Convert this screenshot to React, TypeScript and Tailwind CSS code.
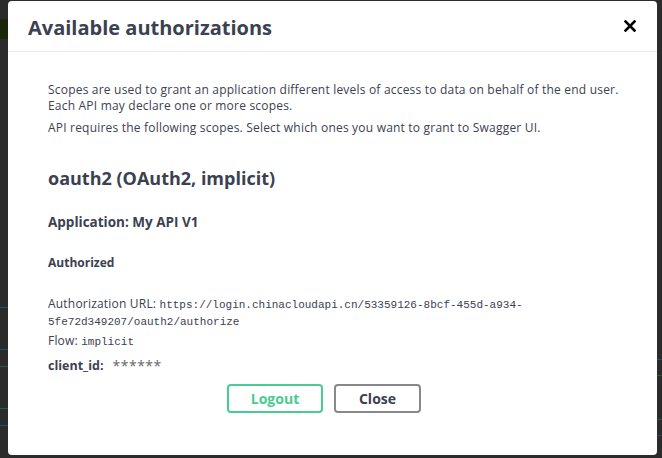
import React from "react";

const SANS = "font-['Open_Sans','Noto_Sans',sans-serif]";
const MONO = "font-['Liberation_Mono','DejaVu_Sans_Mono',monospace]";

function CloseIcon() {
  return (
    <svg width="12" height="12" viewBox="0 0 12 12" aria-hidden="true">
      <path d="M1.5 1.5 L10.5 10.5 M10.5 1.5 L1.5 10.5" stroke="#000" strokeWidth="2.6" strokeLinecap="square" />
    </svg>
  );
}

export default function App() {
  return (
    <div className={`flex h-[458px] w-[662px] bg-[#2b2b2b] ${SANS}`}>
      {/* left strip — page behind the overlay */}
      <div className="flex w-[8px] flex-col">
        <div className="mt-[19px] h-[20px] bg-[#1c2608]" />
        <div className="mt-[268px] h-px bg-[#2f4a66]" />
        <div className="mt-[41px] h-px bg-[#2f4a66]" />
        <div className="mt-[16px] h-px bg-[#2d5a3c]" />
        <div className="mt-[41px] h-px bg-[#2d5a3c]" />
        <div className="mt-[16px] h-px bg-[#2f4a66]" />
      </div>

      {/* modal */}
      <div className="mt-px flex h-[454px] w-[649px] flex-col rounded-[4px] bg-white text-[#3b4151]">
        <div className="flex h-[51px] items-center justify-between border-b border-[#ebebeb] pl-5 pr-[15px] pt-[3px]">
          <h3 className="text-[20px] font-bold leading-none">Available authorizations</h3>
          <button className="mb-[3px] flex h-6 w-6 items-center justify-center">
            <CloseIcon />
          </button>
        </div>

        <div className="flex flex-col pl-[40px] text-[12px] tracking-[0.2px]">
          <div className="mt-[30px] whitespace-nowrap leading-[16px]">
            <p>Scopes are used to grant an application different levels of access to data on behalf of the end user.</p>
            <p>Each API may declare one or more scopes.</p>
          </div>
          <p className="mt-[6px] whitespace-nowrap leading-[15px]">
            API requires the following scopes. Select which ones you want to grant to Swagger UI.
          </p>

          <h4 className="mt-[31px] text-[18px] font-bold leading-[24px] tracking-normal">oauth2 (OAuth2, implicit)</h4>
          <h6 className="mt-[23px] text-[13.5px] font-bold leading-[18px] tracking-normal">Application: My API V1</h6>
          <h6 className="mt-[24px] text-[12px] font-bold leading-[16px] tracking-normal">Authorized</h6>

          <p className="mt-[24px] leading-[17px]">
            Authorization URL:{" "}
            <code className={`${MONO} text-[11px] leading-none tracking-normal`}>https://login.chinacloudapi.cn/53359126-8bcf-455d-a934-</code>
            <br />
            <code className={`${MONO} text-[11px] leading-none tracking-normal`}>5fe72d349207/oauth2/authorize</code>
          </p>
          <p className="mt-[3px] leading-[17px]">
            Flow: <code className={`${MONO} text-[11px] leading-none tracking-normal`}>implicit</code>
          </p>
          <div className="mt-[8px] flex items-center leading-[18px] tracking-normal">
            <label className="text-[12.5px] font-bold">client_id:</label>
            <span className="ml-[9px] text-[14px] leading-none tracking-[0.5px] text-[#666]">******</span>
          </div>

          <div className="ml-[179px] mt-[9px] flex gap-[11px] tracking-normal">
            <button className="h-[29px] w-[96px] rounded-[4px] border-2 border-[#49cc90] text-[14px] font-bold text-[#49cc90]">
              Logout
            </button>
            <button className="h-[29px] w-[87px] rounded-[4px] border-2 border-[#888] text-[14px] font-bold text-[#3b4151]">
              Close
            </button>
          </div>
        </div>
      </div>

      {/* right strip */}
      <div className="flex flex-1 flex-col">
        <div className="mt-[359px] h-px bg-[#2f4a66]" />
        <div className="mt-[15px] h-px bg-[#2d5a3c]" />
        <div className="mt-[43px] h-px bg-[#2d5a3c]" />
        <div className="mt-[15px] h-px bg-[#2f4a66]" />
      </div>
    </div>
  );
}
